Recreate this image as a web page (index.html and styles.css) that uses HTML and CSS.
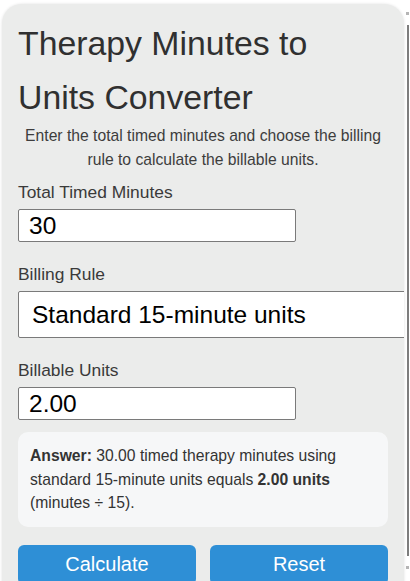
FILE: index.html
```html
<!DOCTYPE html>
<html lang="en">
<head>
<meta charset="utf-8">
<title>Therapy Minutes to Units Converter</title>
<link rel="stylesheet" href="styles.css">
</head>
<body>
<main class="card">
  <h1 class="title">Therapy Minutes to Units Converter</h1>
  <p class="intro">Enter the total timed minutes and choose the billing rule to calculate the billable units.</p>

  <div class="field">
    <label class="label" for="minutes">Total Timed Minutes</label>
    <input class="input" id="minutes" type="text" value="30">
  </div>

  <div class="field">
    <label class="label" for="rule">Billing Rule</label>
    <select class="select" id="rule">
      <option>Standard 15-minute units</option>
      <option>CMS 8-minute rule</option>
    </select>
  </div>

  <div class="field">
    <label class="label" for="units">Billable Units</label>
    <input class="input" id="units" type="text" value="2.00">
  </div>

  <div class="answer">
    <strong>Answer:</strong> 30.00 timed therapy minutes using standard 15-minute units equals <strong>2.00 units</strong> (minutes ÷ 15).
  </div>

  <div class="actions">
    <button class="btn" type="button">Calculate</button>
    <button class="btn" type="button">Reset</button>
  </div>
</main>
<div class="scrollbar"><span class="dot top"></span><span class="track"></span><span class="dot bottom"></span></div>
</body>
</html>
```

FILE: styles.css
```css
* { box-sizing: border-box; }

html, body {
  margin: 0;
  padding: 0;
  background: #ffffff;
  overflow: hidden;
}

body {
  font-family: "Liberation Sans", Arial, sans-serif;
  color: #333333;
}

.card {
  width: 402px;
  margin: 4px 0 0 2px;
  padding: 12px 16px 20px;
  background: #ebeceb;
  border-radius: 20px;
  box-shadow: 0 0 3px rgba(0, 0, 0, 0.12);
  overflow: hidden;
}

.title {
  margin: 0;
  font-size: 33.8px;
  line-height: 54px;
  font-weight: 400;
  color: #303030;
}

.intro {
  margin: 0 0 6px;
  font-size: 15.7px;
  line-height: 24px;
  text-align: center;
  color: #3d3d3d;
}

.field {
  margin-bottom: 18px;
}

.label {
  display: block;
  font-size: 17.4px;
  line-height: 28px;
  margin-bottom: 3px;
  color: #3a3a3a;
}

.input {
  display: block;
  width: 278px;
  height: 33px;
  padding: 0 10px;
  font-family: "Liberation Sans", Arial, sans-serif;
  font-size: 24.5px;
  color: #000000;
  background: #ffffff;
  border: 1px solid #7a7a7a;
  border-radius: 2px;
}

.select {
  display: block;
  width: 420px;
  height: 47px;
  padding: 0 13px;
  font-family: "Liberation Sans", Arial, sans-serif;
  font-size: 24.5px;
  color: #000000;
  background: #ffffff;
  border: 1px solid #7a7a7a;
  border-radius: 2px;
  appearance: none;
  -webkit-appearance: none;
}

.answer {
  margin-top: -6px;
  padding: 12px;
  background: #f6f7f8;
  border-radius: 10px;
  font-size: 15.7px;
  line-height: 23.5px;
  color: #333333;
}

.answer strong { font-weight: 700; }

.actions {
  display: flex;
  gap: 14px;
  margin-top: 18px;
}

.btn {
  flex: 1;
  height: 40px;
  padding: 0;
  font-family: "Liberation Sans", Arial, sans-serif;
  font-size: 20px;
  line-height: 23px;
  color: #ffffff;
  background: #2e8fd6;
  border: none;
  border-radius: 6px;
}

.scrollbar {
  position: fixed;
  top: 12px;
  right: 1px;
  bottom: 12px;
  width: 3px;
  display: flex;
  flex-direction: column;
  align-items: center;
}

.scrollbar .track {
  flex: 1;
  width: 2px;
  margin: 10px 0;
  background: #7d7d7d;
}

.scrollbar .dot {
  width: 3px;
  height: 3px;
  background: #b5b5b5;
}
```
